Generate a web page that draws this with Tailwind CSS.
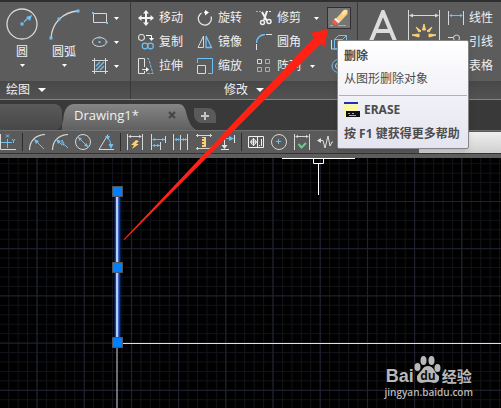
<!DOCTYPE html>
<html lang="zh-CN">
<head>
    <meta charset="UTF-8">
    <meta name="viewport" content="width=device-width, initial-scale=1.0">
    <title>Drawing1</title>
    <script src="https://cdn.jsdelivr.net/npm/@tailwindcss/browser@4"></script>
</head>
<body class="relative flex flex-col min-h-screen overflow-x-hidden bg-black text-xs leading-4 text-[#f0f0f0] font-['Noto_Sans','Noto_Sans_CJK_SC',sans-serif]">

    <!-- Ribbon -->
    <header class="flex overflow-hidden bg-[#5c5c5c] border-t-2 border-[#303030]">

        <!-- Draw -->
        <section class="flex flex-col shrink-0 w-[131px] border-r border-[#3a3a3a]">
            <div class="flex h-[79px] pt-1 pl-1">
                <button class="flex flex-col items-center w-9 pt-0.5">
                    <svg class="w-8 h-8" viewBox="0 0 32 32" fill="none">
                        <circle cx="16" cy="16" r="15" stroke="#d8d8d8" stroke-width="1.3"/>
                        <path d="M18 14l5-5" stroke="#6fc0f5" stroke-width="1.3"/>
                        <path d="M26 7l-2 6-4-4zM14.500 14.500h3v3h-3z" fill="#6fc0f5"/>
                    </svg>
                    <span class="mt-1">圆</span>
                    <svg class="w-[5px] h-[3px] mt-1" viewBox="0 0 5 3"><path d="M0 0h5L2.500 3z" fill="#fff"/></svg>
                </button>
                <button class="flex flex-col items-center w-12 pt-0.5">
                    <svg class="w-8 h-8" viewBox="0 0 32 32" fill="none">
                        <path d="M3 30C4 15 15 4 30 3" stroke="#d8d8d8" stroke-width="1.3"/>
                        <path d="M1.500 28.500h3v3h-3zM9.500 9.500h3v3h-3zM28.500 1.500h3v3h-3z" fill="#6fc0f5"/>
                    </svg>
                    <span class="mt-1">圆弧</span>
                    <svg class="w-[5px] h-[3px] mt-1" viewBox="0 0 5 3"><path d="M0 0h5L2.500 3z" fill="#fff"/></svg>
                </button>
                <div class="flex flex-col ml-1">
                    <button aria-label="矩形" class="flex items-center gap-1.5 h-6">
                        <svg class="w-4 h-4" viewBox="0 0 16 16" fill="none"><path d="M1.500 3.500h13v9h-13z" stroke="#d8d8d8"/><path d="M0 2h2v2H0zM14 12h2v2h-2z" fill="#6fc0f5"/></svg>
                        <svg class="w-[5px] h-[3px]" viewBox="0 0 5 3"><path d="M0 0h5L2.500 3z" fill="#fff"/></svg>
                    </button>
                    <button aria-label="椭圆" class="flex items-center gap-1.5 h-6">
                        <svg class="w-4 h-4" viewBox="0 0 16 16" fill="none"><ellipse cx="7.500" cy="8" rx="7" ry="4.500" stroke="#d8d8d8"/><path d="M6.500 2.500h2v2h-2zM6.500 7h2v2h-2zM13.500 7h2v2h-2z" fill="#6fc0f5"/></svg>
                        <svg class="w-[5px] h-[3px]" viewBox="0 0 5 3"><path d="M0 0h5L2.500 3z" fill="#fff"/></svg>
                    </button>
                    <button aria-label="图案填充" class="flex items-center gap-1.5 h-6">
                        <svg class="w-4 h-4" viewBox="0 0 16 16" fill="none"><path d="M0 2.500h16M0 13.500h16M2.500 0v16M13.500 0v16" stroke="#d8d8d8"/><path d="M4 8l4-4M4 12l8-8M8 12l4-4" stroke="#6fc0f5" stroke-width="1.300"/></svg>
                        <svg class="w-[5px] h-[3px]" viewBox="0 0 5 3"><path d="M0 0h5L2.500 3z" fill="#fff"/></svg>
                    </button>
                </div>
            </div>
            <button class="flex items-center gap-2 h-[18px] px-1.5 bg-linear-to-b from-[#484848] to-[#525252]">
                绘图
                <svg class="w-2 h-1" viewBox="0 0 8 4"><path d="M0 0h8L4 4z" fill="#fff"/></svg>
            </button>
        </section>

        <!-- Modify -->
        <section class="flex flex-col shrink-0 w-[227px] border-r border-[#3a3a3a]">
            <div class="grid grid-cols-[59px_59px_71px_24px] grid-rows-[24px_24px_24px] h-[79px] pt-1 pl-[7px]">
                <button class="flex items-center gap-[5px]">
                    <svg class="w-4 h-4" viewBox="0 0 16 16"><path d="M8 0l3 3.500H9v3.500h3.500V5L16 8l-3.500 3V9H9v3.500h2L8 16l-3-3.500h2V9H3.500v2L0 8l3.500-3v2H7V3.500H5z" fill="#f4f4f4"/></svg>
                    移动
                </button>
                <button class="flex items-center gap-[5px]">
                    <svg class="w-4 h-4" viewBox="0 0 16 16" fill="none"><path d="M4.500 3A6.500 6.500 0 1 0 14 6.500M7 2.500h3" stroke="#e4e4e4" stroke-width="1.300"/><path d="M8 0l4 2.500L8 5.500z" fill="#fff"/></svg>
                    旋转
                </button>
                <button class="flex items-center gap-[5px]">
                    <svg class="w-4 h-4" viewBox="0 0 16 16" fill="none"><path d="M0 1.500h6" stroke="#6fc0f5" stroke-dasharray="2 1"/><path d="M10 1.500h6" stroke="#e4e4e4" stroke-dasharray="2 1"/><path d="M6 2l5 9M11 1l-3 9" stroke="#f0f0f0" stroke-width="2"/><circle cx="6.500" cy="12.500" r="2" stroke="#f0f0f0" stroke-width="1.500"/><circle cx="13" cy="11.500" r="2" stroke="#f0f0f0" stroke-width="1.500"/></svg>
                    修剪
                    <svg class="w-[5px] h-[3px] ml-2" viewBox="0 0 5 3"><path d="M0 0h5L2.500 3z" fill="#fff"/></svg>
                </button>
                <button aria-label="删除" class="flex items-center justify-center w-6 h-[22px] mt-px border border-[#303030] bg-[#757575]">
                    <svg class="w-5 h-5" viewBox="0 0 20 20"><path d="M7 10.500L15 2q3-1 3.500 1v3L11 14z" fill="#f8cf80"/><path d="M12.500 4.700L15 2q3-1 3.500 1l-4 4.500z" fill="#ffe3a6"/><path d="M6.500 10l4.500 3.500-1.500 2-4.500-4z" fill="#f5f5f5"/><path d="M5 11.500l4.500 4q-2 2.500-4.500 1t-2-3z" fill="#e8604c"/><path d="M1 17.500h3M9 17.500h8" stroke="#6fc0f5"/></svg>
                </button>

                <button class="flex items-center gap-[5px]">
                    <svg class="w-4 h-4" viewBox="0 0 16 16" fill="none"><circle cx="3.500" cy="3.500" r="3" stroke="#d8d8d8" stroke-width="1.200"/><path d="M8 1.500h5.500V4" stroke="#fff"/><path d="M11 4h5l-2.500 3z" fill="#fff"/><circle cx="7" cy="12" r="2.800" stroke="#6fc0f5" stroke-width="1.200"/><circle cx="12.500" cy="12" r="2.800" stroke="#6fc0f5" stroke-width="1.200"/></svg>
                    复制
                </button>
                <button class="flex items-center gap-[5px]">
                    <svg class="w-4 h-4" viewBox="0 0 16 16" fill="none"><path d="M6.500 2v11.500H1z" stroke="#d8d8d8"/><path d="M9 2v11.500h5.500z" stroke="#6fc0f5" stroke-width="1.300"/></svg>
                    镜像
                </button>
                <button class="flex items-center gap-[5px]">
                    <svg class="w-4 h-4" viewBox="0 0 16 16" fill="none"><path d="M.5 9Q1 1 9 .5" stroke="#6fc0f5" stroke-width="1.300"/><path d="M10 .5h6M.5 10v6" stroke="#e4e4e4"/></svg>
                    圆角
                </button>
                <button aria-label="分解" class="flex items-center pl-1">
                    <svg class="w-4 h-4" viewBox="0 0 16 16" fill="none"><path d="M.5 6v9h8" stroke="#d8d8d8"/><path d="M3.500 5.500h8v9h-8zM3.500 5.500l4-4h8l-4 4M15.500 1.500v9l-4 4" stroke="#6fc0f5"/></svg>
                </button>

                <button class="flex items-center gap-[5px]">
                    <svg class="w-4 h-4" viewBox="0 0 16 16" fill="none"><path d="M6.500 9V.5h-6v15h6V13M4 11.500h5" stroke="#e4e4e4"/><path d="M8 9l3 2.500L8 14z" fill="#fff"/><path d="M9 .5h1.500l4.500 15H9" stroke="#6fc0f5" stroke-dasharray="3 1"/></svg>
                    拉伸
                </button>
                <button class="flex items-center gap-[5px]">
                    <svg class="w-4 h-4" viewBox="0 0 16 16" fill="none"><path d="M.5 5V.5h15v15H11" stroke="#6fc0f5"/><path d="M.5 7.500h8v8h-8z" stroke="#d8d8d8"/></svg>
                    缩放
                </button>
                <button class="flex items-center gap-[5px]">
                    <svg class="w-4 h-4" viewBox="0 0 16 16" fill="none"><path d="M1.500 1.500h4v4h-4z" stroke="#d8d8d8"/><path d="M9.500 1.500h4v4h-4zM1.500 9.500h4v4h-4zM9.500 9.500h4v4h-4z" stroke="#6fc0f5"/></svg>
                    阵列
                    <svg class="w-[5px] h-[3px] ml-1" viewBox="0 0 5 3"><path d="M0 0h5L2.500 3z" fill="#fff"/></svg>
                </button>
                <button aria-label="偏移" class="flex items-center pl-1">
                    <svg class="w-4 h-4" viewBox="0 0 16 16" fill="none"><circle cx="7.500" cy="8" r="6.500" stroke="#6fc0f5"/><circle cx="7.500" cy="8" r="3" stroke="#d8d8d8"/></svg>
                </button>
            </div>
            <button class="flex items-center justify-center gap-2 h-[18px] bg-linear-to-b from-[#484848] to-[#525252]">
                修改
                <svg class="w-2 h-1" viewBox="0 0 8 4"><path d="M0 0h8L4 4z" fill="#fff"/></svg>
            </button>
        </section>

        <!-- Annotation -->
        <section class="flex flex-col grow">
            <div class="flex h-[79px] pt-1 pl-2.5">
                <button aria-label="文字" class="flex w-10 pt-1">
                    <svg class="w-8 h-8" viewBox="0 0 32 32" fill="none"><path d="M3 31L15 2l12 29M7 21h16" stroke="#dcdcdc" stroke-width="4"/></svg>
                </button>
                <button aria-label="标注" class="flex w-10 pt-1">
                    <svg class="w-8 h-8" viewBox="0 0 32 32" fill="none"><path d="M.5 0v32M31.500 0v32M2 5.500h28" stroke="#d8d8d8"/><path d="M1 5.500l4-2v4zM31 5.500l-4-2v4z" fill="#d8d8d8"/><path d="M14.500 20l1.500-6 1.500 6zM8 17l5 4-2 1zM24 17l-5 4 2 1zM4 25l7-1v3zM28 25l-7-1v3z" fill="#fbd176" stroke="#fbd176"/></svg>
                </button>
                <div class="flex flex-col whitespace-nowrap">
                    <button class="flex items-center gap-[5px] h-6">
                        <svg class="w-4 h-4" viewBox="0 0 16 16" fill="none"><path d="M.5 1v14M15.500 1v14" stroke="#d8d8d8"/><path d="M2 5.500h12" stroke="#6fc0f5"/><path d="M1 5.500L4 4v3zM15 5.500L12 4v3z" fill="#6fc0f5"/></svg>
                        线性
                    </button>
                    <button class="flex items-center gap-[5px] h-6">
                        <svg class="w-4 h-4" viewBox="0 0 16 16" fill="none"><path d="M0 3.500h5" stroke="#d8d8d8"/><circle cx="8.500" cy="4" r="3" stroke="#d8d8d8"/></svg>
                        引线
                    </button>
                    <button class="flex items-center gap-[5px] h-6">
                        <svg class="w-4 h-4" viewBox="0 0 16 16" fill="none"><path d="M.5 2.500h15v11H.5zM.5 6.500h15M.5 10h15M5.500 2v11M10.500 2v11" stroke="#d8d8d8"/></svg>
                        表格
                    </button>
                </div>
            </div>
            <div class="h-[18px] bg-linear-to-b from-[#484848] to-[#525252]"></div>
        </section>
    </header>

    <!-- File tabs -->
    <nav class="flex items-end h-[31px] border-t border-[#858585] bg-[#393939]">
        <a href="#" aria-label="开始" class="w-[62px] h-[26px] rounded-r-lg bg-linear-to-b from-[#5a5a5a] to-[#474747]"></a>
        <div class="relative flex items-center justify-between w-[134px] h-[26px] pl-3 pr-5">
            <svg class="absolute inset-0 w-full h-full" viewBox="0 0 134 26" preserveAspectRatio="none">
                <defs><linearGradient id="tab" x2="0" y2="1"><stop stop-color="#858585"/><stop offset="1" stop-color="#606060"/></linearGradient></defs>
                <path d="M-4 26Q1 22 2 10Q4 1 11 0H117Q122 0 124 8Q127 22 134 26z" fill="url(#tab)"/>
            </svg>
            <a href="#" class="relative pb-1 font-['Open_Sans',sans-serif] text-[13px]">Drawing1*</a>
            <button aria-label="关闭" class="relative pb-1">
                <svg class="w-2 h-2" viewBox="0 0 8 8"><path d="M1 1l6 6M7 1L1 7" stroke="#444" stroke-width="2"/></svg>
            </button>
        </div>
        <button aria-label="新图形" class="flex items-center justify-center w-[22px] h-[15px] mb-[7px] -ml-0.5 rounded-tr-lg rounded-bl-lg bg-[#5a5a5a]">
            <svg class="w-2 h-2" viewBox="0 0 8 8"><path d="M4 0v8M0 4h8" stroke="#c4c4c4" stroke-width="2"/></svg>
        </button>
    </nav>

    <!-- Dimension toolbar -->
    <div class="flex items-center gap-[7px] h-[23px] bg-[#5a5a5a] border-t border-[#707070]">
        <button aria-label="坐标"><svg class="w-4 h-4" viewBox="0 0 16 16" fill="none"><path d="M.5 0v15.500H16" stroke="#d8d8d8"/><path d="M7.500 5v9M1 8.500h11M6 .5l3 3M9 .5l-3 3M12 5l1.500 2L15 5M13.500 7v2" stroke="#6fc0f5"/></svg></button>
        <span class="w-px h-[18px] -mx-px bg-[#2c2c2c]"></span>
        <button aria-label="半径"><svg class="w-4 h-4" viewBox="0 0 16 16" fill="none"><path d="M.5 16Q1 2 16 .5" stroke="#d8d8d8" stroke-width="1.200"/><path d="M7 7l8 8" stroke="#6fc0f5"/><path d="M5 5l5 2-3 3z" fill="#6fc0f5"/></svg></button>
        <button aria-label="折弯"><svg class="w-4 h-4" viewBox="0 0 16 16" fill="none"><path d="M.5 16Q1 2 16 .5" stroke="#d8d8d8" stroke-width="1.200"/><path d="M6 7l4 4V6l2 4-1 1h2l3 3" stroke="#6fc0f5"/><path d="M4 5l5 2-3 3z" fill="#6fc0f5"/></svg></button>
        <button aria-label="直径"><svg class="w-4 h-4" viewBox="0 0 16 16" fill="none"><circle cx="8" cy="8" r="7.500" stroke="#d8d8d8"/><path d="M4 4l8 8" stroke="#6fc0f5"/><path d="M2.500 2.500l4.500 2-2.500 2.500zM13.500 13.500l-4.500-2 2.500-2.500z" fill="#6fc0f5"/></svg></button>
        <button aria-label="角度"><svg class="w-4 h-4" viewBox="0 0 16 16" fill="none"><path d="M10 .5L1 15.500h15" stroke="#d8d8d8"/><path d="M9 3q4 3 4 10" stroke="#6fc0f5"/><path d="M7 2h5l-2 4zM10.500 10h5L13 15z" fill="#6fc0f5"/></svg></button>
        <span class="w-px h-[18px] -mx-px bg-[#2c2c2c]"></span>
        <button aria-label="快速标注"><svg class="w-4 h-4" viewBox="0 0 16 16" fill="none"><path d="M.5 0v16M15.500 0v16M2 2.500h12" stroke="#d8d8d8"/><path d="M1 2.500L4 1v3zM15 2.500L12 1v3z" fill="#d8d8d8"/><path d="M9 6l-5 5h3l-2 4 7-5H9l3-3z" fill="#fbd176"/></svg></button>
        <button aria-label="基线"><svg class="w-4 h-4" viewBox="0 0 16 16" fill="none"><path d="M1.500 0v16M10.500 8v8M15.500 2v7" stroke="#d8d8d8"/><path d="M3 5.500h12M3 11.500h7" stroke="#6fc0f5"/><path d="M2 5.500L5 4v3zM15 5.500L12 4v3zM2 11.500L5 10v3zM10 11.500L7 10v3z" fill="#6fc0f5"/></svg></button>
        <button aria-label="连续"><svg class="w-4 h-4" viewBox="0 0 16 16" fill="none"><path d="M.5 0v16M7.500 1v15M14.500 0v16" stroke="#d8d8d8"/><path d="M2 5.500h12" stroke="#6fc0f5"/><path d="M1 5.500L4 4v3zM7 5.500L5 4v3zM8 5.500L11 4v3zM14 5.500L12 4v3z" fill="#6fc0f5"/></svg></button>
        <button aria-label="等距标注"><svg class="w-4 h-4" viewBox="0 0 16 16" fill="none"><path d="M0 1.500h16M0 14.500h16M1.500 0v3M14.500 0v3M1.500 13v3M14.500 13v3" stroke="#d8d8d8"/><path d="M6 3h4v10H6V11h2v-1H6V8h2V7H6V5h2V4H6z" fill="#fbd176"/></svg></button>
        <button aria-label="折断标注"><svg class="w-4 h-4" viewBox="0 0 16 16" fill="none"><path d="M5.500 0v12M2 15.500h8M15.500 1v8" stroke="#e4e4e4"/><path d="M2.500 11h6l-3 4z" fill="#e4e4e4"/><path d="M1 4.500h11" stroke="#6fc0f5"/><path d="M10 2l5 2.500L10 7z" fill="#6fc0f5"/></svg></button>
        <span class="w-px h-[18px] -mx-px bg-[#2c2c2c]"></span>
        <button aria-label="公差"><svg class="w-4 h-4" viewBox="0 0 16 16" fill="none"><path d="M.5 2.500h15v11H.5zM9.500 3v10M2 8h7M5.500 4v8M11 11.500h1M13.500 5v7" stroke="#f0f0f0"/><circle cx="5.500" cy="8" r="2.500" stroke="#f0f0f0"/></svg></button>
        <button aria-label="圆心标记"><svg class="w-4 h-4" viewBox="0 0 16 16" fill="none"><circle cx="8" cy="8" r="7.500" stroke="#d8d8d8"/><path d="M7.500 5v5M5 7.500h5" stroke="#6fc0f5"/></svg></button>
        <button aria-label="检验"><svg class="w-4 h-4" viewBox="0 0 16 16" fill="none"><path d="M.5 0v16M15.500 0v16M2 2.500h12" stroke="#d8d8d8"/><path d="M1 2.500L4 1v3zM15 2.500L12 1v3z" fill="#d8d8d8"/><path d="M4.500 10l3 3.500L12 9" stroke="#5fd287" stroke-width="2"/></svg></button>
        <button aria-label="折弯线性"><svg class="w-4 h-4" viewBox="0 0 16 16" fill="none"><path d="M1 6.500h5L8 14l3-12 2 10 2-4h1" stroke="#e0e0e0"/><path d="M0 6.500L4 4v5z" fill="#e0e0e0"/></svg></button>
        <select aria-label="标注样式" class="grow h-[21px] ml-[79px] appearance-none bg-linear-to-b from-[#f0f0f0] to-[#cfcfcf]"></select>
    </div>
    <div class="h-[5px] bg-[#5e5e5e] border-t border-[#333]"></div>

    <!-- Drawing area -->
    <main class="relative grow min-h-[249px] overflow-hidden bg-black">
        <svg class="absolute inset-0 w-full h-full" fill="none">
            <defs>
                <pattern id="minor" x="36.500" y="43" width="9.440" height="9.440" patternUnits="userSpaceOnUse">
                    <path d="M0 .5h10M.5 0v10" stroke="#12131a"/>
                </pattern>
                <pattern id="major" x="36.500" y="43" width="47.200" height="47.200" patternUnits="userSpaceOnUse">
                    <path d="M0 .5h48M.5 0v48" stroke="#212330"/>
                </pattern>
            </defs>
            <rect width="100%" height="100%" fill="url(#minor)"/>
            <rect width="100%" height="100%" fill="url(#major)"/>
            <path d="M282 .5h73" stroke="#fff"/>
            <path d="M313.500 0v5.500h10V0M318.500 6v31" stroke="#fff"/>
            <path d="M117 185.500H4000" stroke="#e0e0e0"/>
            <path d="M117 185v4000" stroke="#909090" stroke-width="1.500"/>
            <path d="M117.500 34v150" stroke="#12337c" stroke-width="6"/>
            <path d="M117.500 34v150" stroke="#3a66c0" stroke-width="3.500"/>
            <path d="M117 34v150" stroke="#b4cbff" stroke-width="2"/>
            <path d="M112.500 28.500h10v10h-10zM112.500 104.500h10v10h-10zM112.500 179.500h10v10h-10z" fill="#0080ff" stroke="#53575c"/>
        </svg>

        <!-- Watermark -->
        <div class="absolute right-7 bottom-2.5 flex flex-col items-center gap-0.5 text-[#b8b8b8] font-['Open_Sans','Noto_Sans_CJK_SC',sans-serif]">
            <div class="flex items-end font-bold leading-4">
                <span class="font-['Liberation_Sans',sans-serif] text-lg leading-4">Bai</span>
                <svg class="w-7 h-7" viewBox="0 0 28 28" fill="currentColor">
                    <ellipse cx="3.500" cy="11" rx="3" ry="4"/><ellipse cx="9.500" cy="4.500" rx="3" ry="4.500"/><ellipse cx="17.500" cy="4.500" rx="3" ry="4.500"/><ellipse cx="23.500" cy="12" rx="3" ry="4"/>
                    <path d="M14 10q4 0 6 4t5 6q1 7-5 7-3-1-6-1t-6 1q-6 0-5-7 2-3 5-6 2-4 6-4z"/>
                    <text x="14" y="24" font-size="12" text-anchor="middle" fill="#111">du</text>
                </svg>
                <span class="text-[15px] leading-4">经验</span>
            </div>
            <a href="#" class="text-[10px] leading-3 font-semibold">jingyan.baidu.com</a>
        </div>
    </main>

    <!-- Pointer arrow -->
    <svg class="absolute left-0 top-0 w-[340px] h-[250px] pointer-events-none" viewBox="0 0 340 250">
        <path d="M123.500 239.500L314.500 37L310 33L328 29L324.500 47L321 43.500L124.500 240z" fill="#ff2114"/>
    </svg>

    <!-- Tooltip -->
    <div role="tooltip" class="absolute left-[337px] top-10 w-[132px] h-[109px] px-px rounded-xs border border-[#858585] bg-linear-to-b from-white to-[#e4e4f0] text-[#4c4c4c] whitespace-nowrap shadow-md">
        <h2 class="px-[5px] pt-[7px] font-semibold">删除</h2>
        <p class="px-[5px] pt-[7px]">从图形删除对象</p>
        <hr class="mt-2 border-[#b0b0b4]">
        <div class="flex items-center gap-1 px-[5px] pt-1.5 font-bold">
            <svg class="w-4 h-4" viewBox="0 0 16 16"><path d="M0 0h14v15H0z" fill="#fbf6a8"/><path d="M0 0h14v2H0z" fill="#1a2fc0"/><path d="M2 9h14v6H2z" fill="#111"/><path d="M4 11.500h2M8 11.500h2M5 13.500h7" stroke="#aaa"/></svg>
            ERASE
        </div>
        <p class="px-[5px] pt-2 font-bold">按 F1 键获得更多帮助</p>
    </div>
</body>
</html>
